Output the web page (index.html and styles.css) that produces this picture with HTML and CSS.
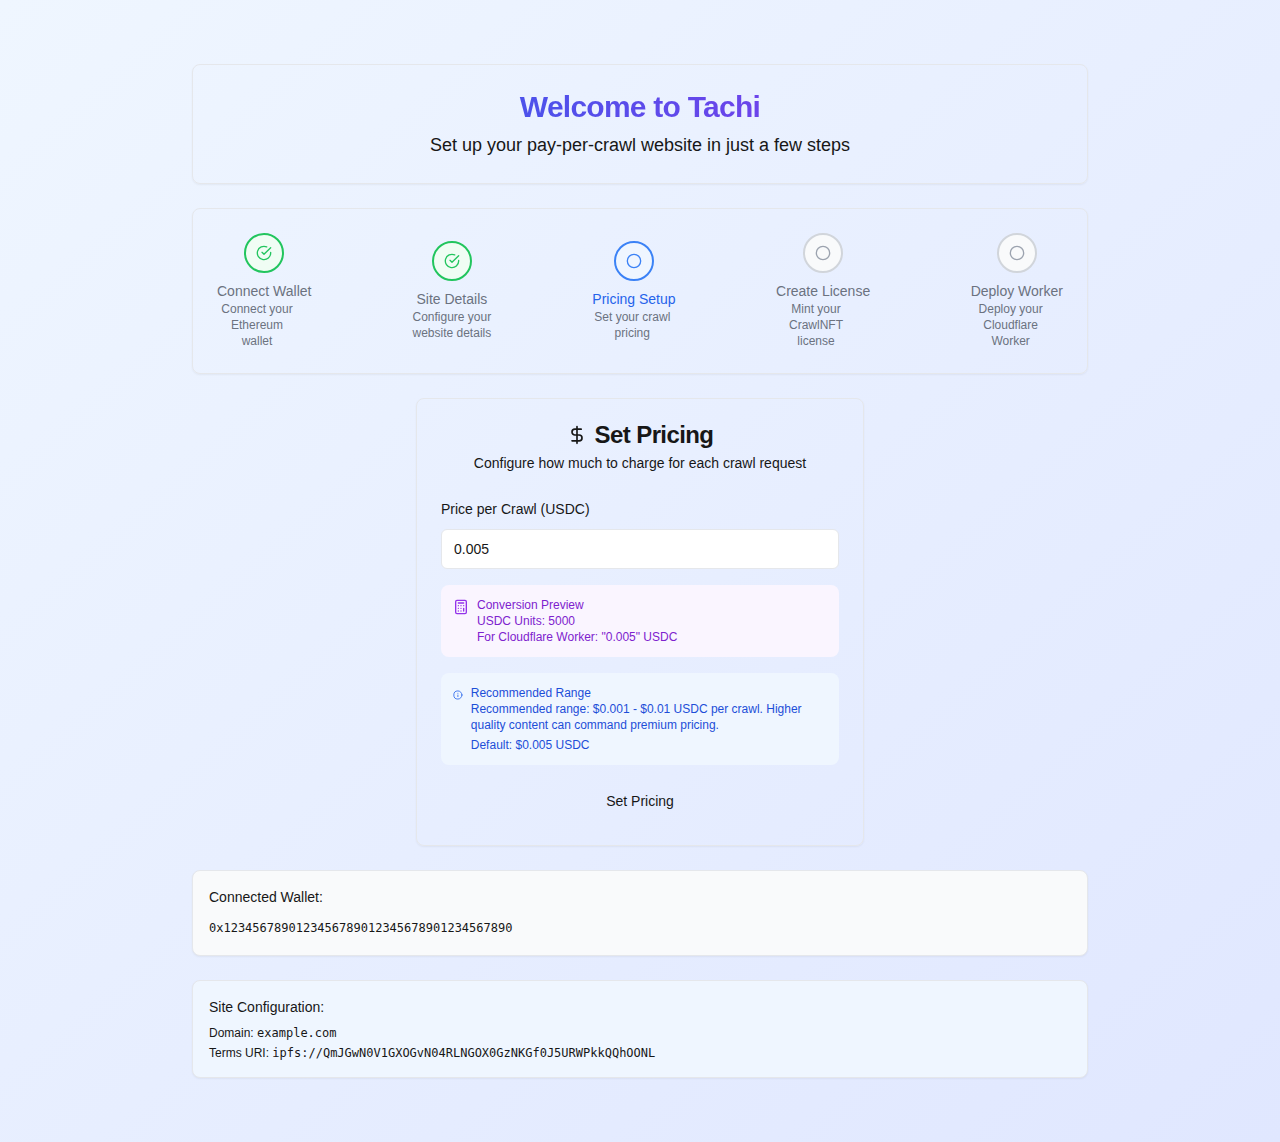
FILE: index.html
```html
<!DOCTYPE html>
<html lang="en">
<head>
<meta charset="utf-8">
<title>Welcome to Tachi</title>
<link rel="stylesheet" href="styles.css">
</head>
<body>
<main class="page">
  <header class="card hero">
    <h1 class="hero-title">Welcome to Tachi</h1>
    <p class="hero-text">Set up your pay-per-crawl website in just a few steps</p>
  </header>

  <ol class="card steps">
    <li class="step done">
      <span class="step-icon"><svg class="icon" viewBox="0 0 24 24"><path d="M22 11.08V12a10 10 0 1 1-5.93-9.14"/><path d="m9 11 3 3L22 4"/></svg></span>
      <div class="step-body"><p class="step-title">Connect Wallet</p><p class="step-text">Connect your Ethereum wallet</p></div>
    </li>
    <li class="step done">
      <span class="step-icon"><svg class="icon" viewBox="0 0 24 24"><path d="M22 11.08V12a10 10 0 1 1-5.93-9.14"/><path d="m9 11 3 3L22 4"/></svg></span>
      <div class="step-body"><p class="step-title">Site Details</p><p class="step-text">Configure your website details</p></div>
    </li>
    <li class="step current">
      <span class="step-icon"><svg class="icon" viewBox="0 0 24 24"><circle cx="12" cy="12" r="10"/></svg></span>
      <div class="step-body"><p class="step-title">Pricing Setup</p><p class="step-text">Set your crawl pricing</p></div>
    </li>
    <li class="step">
      <span class="step-icon"><svg class="icon" viewBox="0 0 24 24"><circle cx="12" cy="12" r="10"/></svg></span>
      <div class="step-body"><p class="step-title">Create License</p><p class="step-text">Mint your CrawlNFT license</p></div>
    </li>
    <li class="step">
      <span class="step-icon"><svg class="icon" viewBox="0 0 24 24"><circle cx="12" cy="12" r="10"/></svg></span>
      <div class="step-body"><p class="step-title">Deploy Worker</p><p class="step-text">Deploy your Cloudflare Worker</p></div>
    </li>
  </ol>

  <section class="card pricing">
    <div class="pricing-head">
      <h2 class="pricing-title"><svg class="icon icon-lg" viewBox="0 0 24 24"><path d="M12 2v20"/><path d="M17 5H9.5a3.5 3.5 0 0 0 0 7h5a3.5 3.5 0 0 1 0 7H6"/></svg>Set Pricing</h2>
      <p class="pricing-text">Configure how much to charge for each crawl request</p>
    </div>
    <form class="form">
      <div class="field">
        <label class="label" for="price">Price per Crawl (USDC)</label>
        <input class="input" id="price" type="text" value="0.005">
      </div>
      <div class="note note-purple">
        <svg class="icon note-icon" viewBox="0 0 24 24"><rect width="16" height="20" x="4" y="2" rx="2"/><path d="M8 6h8M16 14v4M16 10h.01M12 10h.01M8 10h.01M12 14h.01M8 14h.01M12 18h.01M8 18h.01"/></svg>
        <div>
          <p>Conversion Preview</p>
          <p>USDC Units: 5000</p>
          <p>For Cloudflare Worker: "0.005" USDC</p>
        </div>
      </div>
      <div class="note note-blue">
        <svg class="icon note-icon" viewBox="0 0 24 24"><circle cx="12" cy="12" r="10"/><path d="M12 16v-4M12 8h.01"/></svg>
        <div>
          <p>Recommended Range</p>
          <p>Recommended range: $0.001 - $0.01 USDC per crawl. Higher quality content can command premium pricing.</p>
          <p class="note-default">Default: $0.005 USDC</p>
        </div>
      </div>
      <button class="button" type="button">Set Pricing</button>
    </form>
  </section>

  <section class="card info info-gray">
    <h3 class="info-title">Connected Wallet:</h3>
    <div class="info-wallet"><code class="mono">0x1234567890123456789012345678901234567890</code></div>
  </section>

  <section class="card info info-blue">
    <h3 class="info-title">Site Configuration:</h3>
    <div class="info-rows">
      <p>Domain: <code class="mono">example.com</code></p>
      <p>Terms URI: <code class="mono">ipfs://QmJGwN0V1GXOGvN04RLNGOX0GzNKGf0J5URWPkkQQhOONL</code></p>
    </div>
  </section>
</main>
</body>
</html>
```
FILE: styles.css
```css
* { box-sizing: border-box; margin: 0; padding: 0; }

body {
  min-height: 100vh;
  padding: 64px 192px;
  background: linear-gradient(to bottom right, #eff6ff, #e0e7ff);
  color: #171717;
  font-family: "Liberation Sans", Arial, sans-serif;
  font-size: 16px;
  line-height: 24px;
}

.page { display: flex; flex-direction: column; gap: 24px; }

.card {
  border: 1px solid #e5e7eb;
  border-radius: 8px;
  box-shadow: 0 1px 2px rgba(0, 0, 0, 0.05);
}

.icon {
  width: 16px;
  height: 16px;
  fill: none;
  stroke: currentColor;
  stroke-width: 2;
  stroke-linecap: round;
  stroke-linejoin: round;
}
.icon-lg { width: 20px; height: 20px; }

.hero {
  display: flex;
  flex-direction: column;
  align-items: center;
  gap: 6px;
  padding: 24px;
}
.hero-title {
  background: linear-gradient(to right, #2563eb, #9333ea);
  background-clip: text;
  -webkit-background-clip: text;
  color: transparent;
  font-size: 30px;
  line-height: 36px;
  letter-spacing: -0.025em;
  align-self: stretch;
  text-align: center;
}
.hero-text { font-size: 18px; line-height: 28px; }

.steps {
  display: flex;
  align-items: center;
  justify-content: space-between;
  padding: 24px;
  list-style: none;
}
.step { display: flex; flex-direction: column; align-items: center; gap: 8px; }
.step-icon {
  display: flex;
  align-items: center;
  justify-content: center;
  width: 40px;
  height: 40px;
  border: 2px solid #d1d5db;
  border-radius: 50%;
  background: #f9fafb;
  color: #9ca3af;
}
.step-body { text-align: center; color: #6b7280; }
.step-title { font-size: 14px; line-height: 20px; }
.step-text { max-width: 80px; font-size: 12px; line-height: 16px; }
.done .step-icon { border-color: #22c55e; background: #f0fdf4; color: #22c55e; }
.current .step-icon { border-color: #3b82f6; background: #eff6ff; color: #3b82f6; }
.current .step-title { color: #2563eb; }

.pricing { width: 448px; align-self: center; padding: 24px; }
.pricing-head { display: flex; flex-direction: column; gap: 6px; text-align: center; }
.pricing-title {
  display: flex;
  align-items: center;
  justify-content: center;
  gap: 8px;
  font-size: 24px;
  line-height: 24px;
  letter-spacing: -0.025em;
}
.pricing-text { font-size: 14px; line-height: 20px; }

.form { display: flex; flex-direction: column; gap: 16px; padding-top: 24px; }
.field { display: flex; flex-direction: column; gap: 8px; }
.label { font-size: 14px; line-height: 24px; }
.input {
  width: 100%;
  height: 40px;
  padding: 8px 12px;
  border: 1px solid #e5e7eb;
  border-radius: 6px;
  background: #fff;
  color: inherit;
  font: inherit;
  font-size: 14px;
}
.note {
  display: flex;
  align-items: flex-start;
  gap: 8px;
  padding: 12px;
  border-radius: 8px;
  font-size: 12px;
  line-height: 16px;
}
.note-icon { margin-top: 2px; }
.note-purple { background: #faf5ff; color: #7e22ce; }
.note-purple .note-icon { color: #9333ea; }
.note-blue { background: #eff6ff; color: #1d4ed8; }
.note-blue .note-icon { color: #2563eb; }
.note-default { margin-top: 4px; }
.button {
  height: 40px;
  border: 0;
  background: transparent;
  color: inherit;
  font: inherit;
  font-size: 14px;
}

.info { padding: 16px; }
.info-gray { background: #f9fafb; }
.info-blue { background: #eff6ff; }
.info-title { margin-bottom: 8px; font-size: 14px; font-weight: 400; line-height: 20px; }
.info-wallet { height: 24px; }
.info-rows { display: flex; flex-direction: column; gap: 4px; font-size: 12px; line-height: 16px; }
.mono { font-family: "DejaVu Sans Mono", monospace; font-size: 12px; }
```
